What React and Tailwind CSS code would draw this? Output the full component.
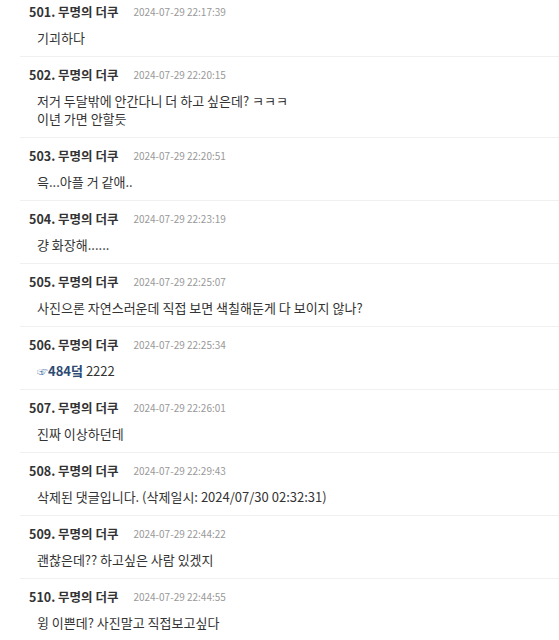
const comments = [
  { no: 501, date: '2024-07-29 22:17:39', lines: ['기괴하다'] },
  { no: 502, date: '2024-07-29 22:20:15', lines: ['저거 두달밖에 안간다니 더 하고 싶은데? ㅋㅋㅋ', '이년 가면 안할듯'] },
  { no: 503, date: '2024-07-29 22:20:51', lines: ['윽...아플 거 같애..'] },
  { no: 504, date: '2024-07-29 22:23:19', lines: ['걍 화장해......'] },
  { no: 505, date: '2024-07-29 22:25:07', lines: ['사진으론 자연스러운데 직접 보면 색칠해둔게 다 보이지 않나?'] },
  { no: 506, date: '2024-07-29 22:25:34', anchor: true },
  { no: 507, date: '2024-07-29 22:26:01', lines: ['진짜 이상하던데'] },
  { no: 508, date: '2024-07-29 22:29:43', lines: ['삭제된 댓글입니다. (삭제일시: 2024/07/30 02:32:31)'] },
  { no: 509, date: '2024-07-29 22:44:22', lines: ['괜찮은데?? 하고싶은 사람 있겠지'] },
  { no: 510, date: '2024-07-29 22:44:55', lines: ['윙 이쁜데? 사진말고 직접보고싶다'] },
];

function Comment({ c }) {
  return (
    <li className="ml-[20px] border-b border-[#f0f0f0] pt-[8px] pb-[9px] pl-[9px]">
      <div className="flex items-center h-[20px] leading-[20px]">
        <span className="text-[12.5px] font-bold text-[#333]">{c.no}. 무명의 더쿠</span>
        <span className="ml-[15px] text-[10px] text-[#999]">{c.date}</span>
      </div>
      <div className="mt-[7px] pl-[8px] text-[13px] leading-[18px] text-[#333]">
        {c.anchor ? (
          <p>
            <span className="text-[#5b7fb0] text-[11px]">☞</span>
            <span className="font-bold text-[#2d4b73]">484덬</span> 2222
          </p>
        ) : (
          c.lines.map((l, i) => <p key={i}>{l}</p>)
        )}
      </div>
    </li>
  );
}

export default function App() {
  return (
    <div className="w-[559px] h-[640px] overflow-hidden bg-white font-['Noto_Sans_CJK_KR',sans-serif]">
      <ul className="-mt-[6px]">
        {comments.map((c) => (
          <Comment key={c.no} c={c} />
        ))}
      </ul>
    </div>
  );
}
